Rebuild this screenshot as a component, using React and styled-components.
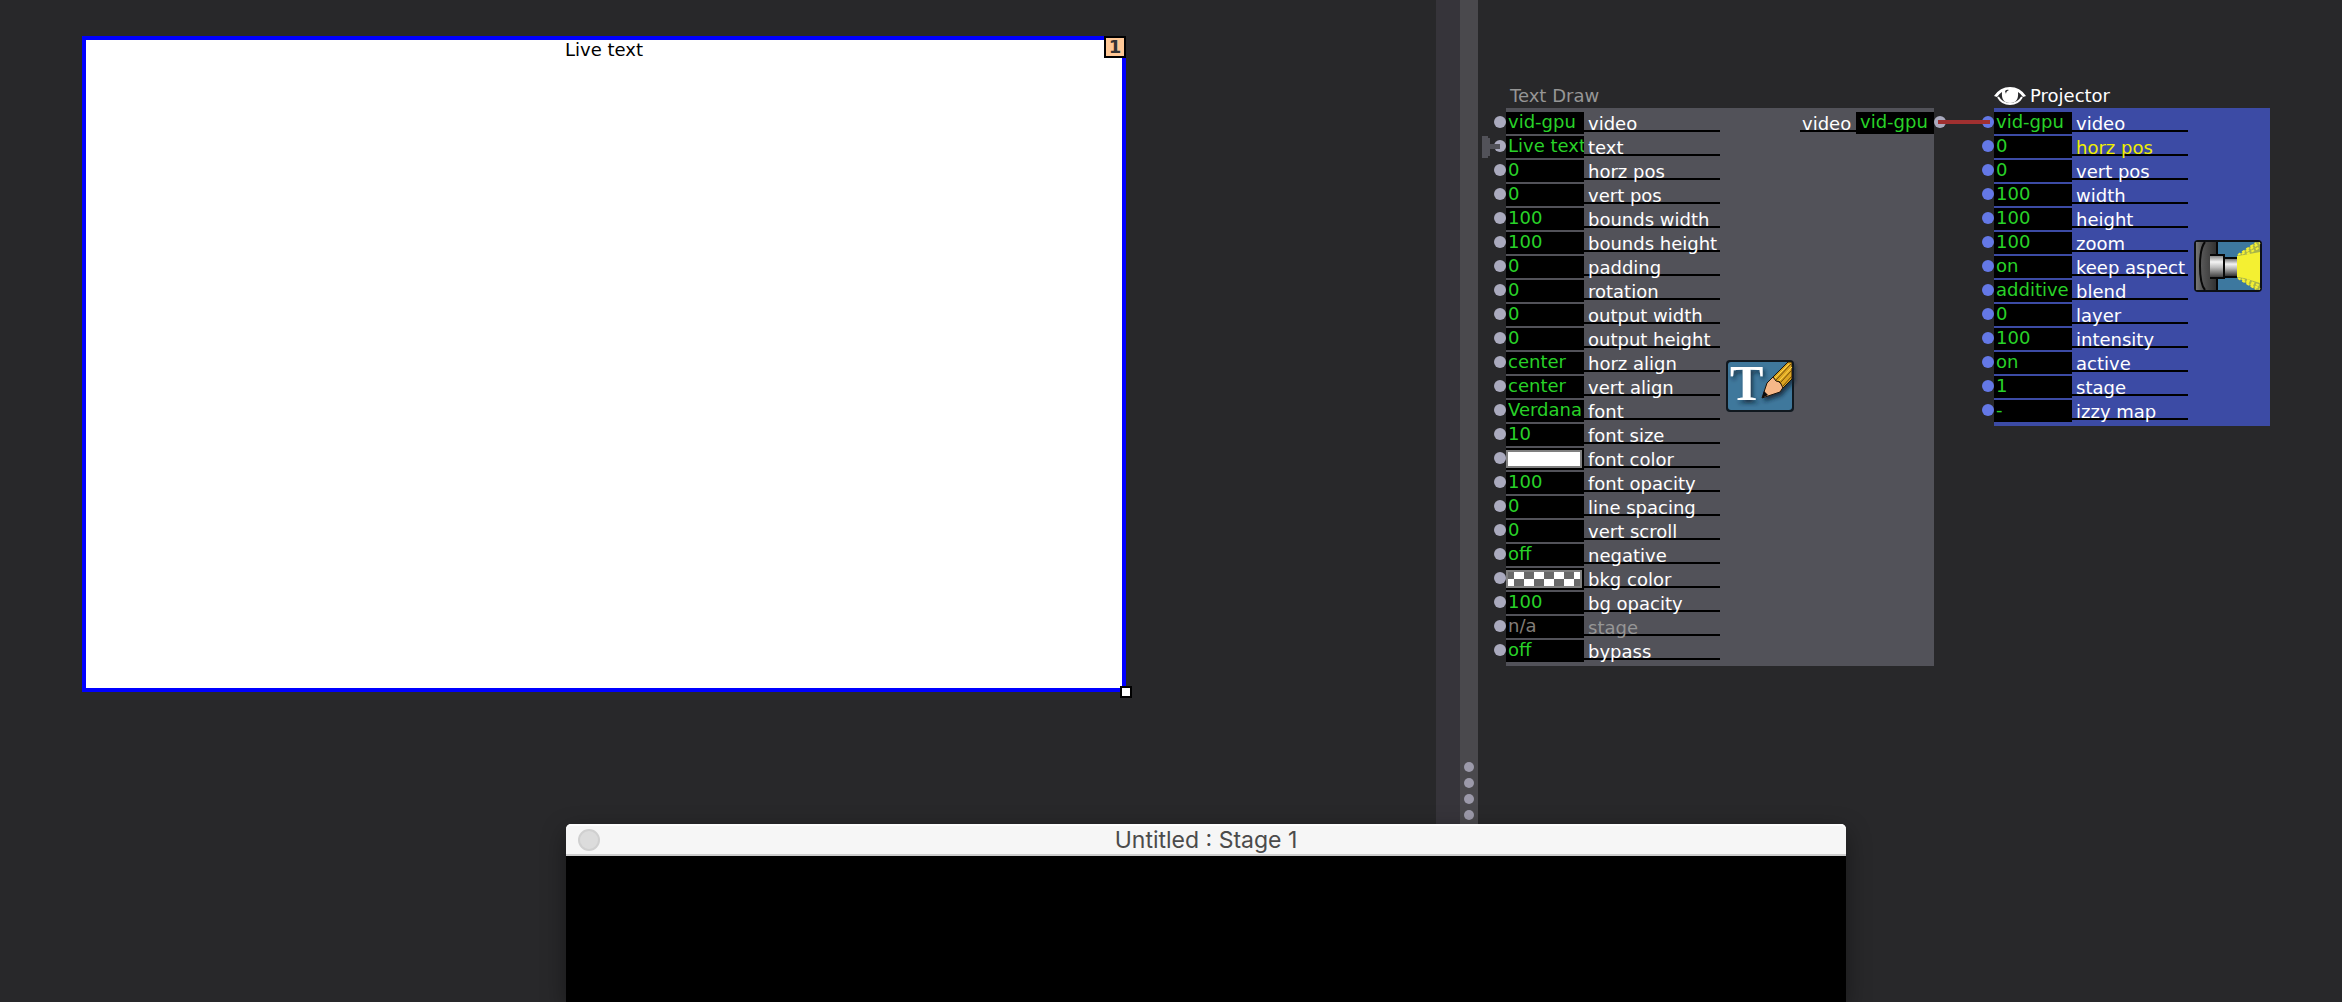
import React, { useState } from 'react'
import styled, { createGlobalStyle, css } from 'styled-components';

const textDrawInputs = [
    {name:'video',value:'vid-gpu'},
    {name:'text',value:'Live text'},
    {name:'horz pos',value:'0'},
    {name:'vert pos',value:'0'},
    {name:'bounds width',value:'100'},
    {name:'bounds height',value:'100'},
    {name:'padding',value:'0'},
    {name:'rotation',value:'0'},
    {name:'output width',value:'0'},
    {name:'output height',value:'0'},
    {name:'horz align',value:'center'},
    {name:'vert align',value:'center'},
    {name:'font',value:'Verdana'},
    {name:'font size',value:'10'},
    {name:'font color',swatch:'solid'},
    {name:'font opacity',value:'100'},
    {name:'line spacing',value:'0'},
    {name:'vert scroll',value:'0'},
    {name:'negative',value:'off'},
    {name:'bkg color',swatch:'checker'},
    {name:'bg opacity',value:'100'},
    {name:'stage',value:'n/a',disabled:true},
    {name:'bypass',value:'off'},
]

const projectorInputs = [
    {name:'video',value:'vid-gpu'},
    {name:'horz pos',value:'0',active:true},
    {name:'vert pos',value:'0'},
    {name:'width',value:'100'},
    {name:'height',value:'100'},
    {name:'zoom',value:'100'},
    {name:'keep aspect',value:'on'},
    {name:'blend',value:'additive'},
    {name:'layer',value:'0'},
    {name:'intensity',value:'100'},
    {name:'active',value:'on'},
    {name:'stage',value:'1'},
    {name:'izzy map',value:'-'},
]

function Property({id,item}) {
    const [value,setValue]=useState(item.value);
    return (
        <PropertyRow>
            {item.swatch
                ? <SwatchField><Swatch id={id} type='button' $kind={item.swatch}/></SwatchField>
                : <ValueInput id={id} value={value} disabled={item.disabled} onChange={(e)=>setValue(e.target.value)}/>
            }
            <PropertyLabel htmlFor={id} $disabled={item.disabled} $active={item.active}>{item.name}</PropertyLabel>
        </PropertyRow>
    )
}

function PropertyList({prefix,items,width}) {
    return (
        <Properties $width={width}>
            {items.map((item)=>(
                <Property key={item.name} id={`${prefix}-${item.name.replace(' ','-')}`} item={item}/>
            ))}
        </Properties>
    )
}

function Ports({items,color}) {
    return (
        <PortColumn>
            {items.map((item)=>(
                <Port key={item.name} $color={color}/>
            ))}
        </PortColumn>
    )
}

function TextDrawIcon() {
    return (
        <svg width='68' height='52' viewBox='0 0 68 52' aria-hidden='true'>
            <defs>
                <filter id='glyphShadow' x='-20%' y='-20%' width='150%' height='150%'>
                    <feDropShadow dx='2' dy='3' stdDeviation='2' floodColor='#0c2030' floodOpacity='0.8'/>
                </filter>
            </defs>
            <rect width='68' height='52' rx='4' fill='#10181f'/>
            <rect x='2' y='2' width='64' height='48' rx='3' fill='#3f789c'/>
            <text x='4' y='40' fontFamily='"Liberation Serif", serif' fontWeight='bold' fontSize='50' fill='#fff' filter='url(#glyphShadow)'>T</text>
            <g filter='url(#glyphShadow)'>
                <path d='M36 38 L41 23 L47 17 L58 26 L54 32 Z' fill='#f6b888' stroke='#1d1408' strokeWidth='1'/>
                <path d='M36 38 L38 31 L42 35 Z' fill='#0b0b0b'/>
                <path d='M47 17 L62 2 H66 V19 L57 28 L54 22 L50 21 Z' fill='#dda520' stroke='#1d1408' strokeWidth='1'/>
                <path d='M50 20 L65 4 M54 23 L66 10 M57 26 L66 16' stroke='#6d4a0a' strokeWidth='1'/>
                <path d='M49 18 L63 4 M53 21 L66 7' stroke='#ffd84a' strokeWidth='1'/>
            </g>
        </svg>
    )
}

function ProjectorIcon() {
    return (
        <svg width='68' height='52' viewBox='0 0 68 52' aria-hidden='true'>
            <defs>
                <linearGradient id='metal' x1='0' y1='0' x2='0' y2='1'>
                    <stop offset='0' stopColor='#777'/>
                    <stop offset='0.3' stopColor='#f4f4f4'/>
                    <stop offset='0.55' stopColor='#bbb'/>
                    <stop offset='1' stopColor='#333'/>
                </linearGradient>
                <linearGradient id='housing' x1='0' y1='0' x2='1' y2='0'>
                    <stop offset='0' stopColor='#777'/>
                    <stop offset='0.3' stopColor='#555'/>
                    <stop offset='1' stopColor='#303030'/>
                </linearGradient>
            </defs>
            <rect width='68' height='52' rx='4' fill='#0d1015'/>
            <rect x='2' y='2' width='64' height='48' rx='2' fill='#3d789f'/>
            <path d='M43 16 L66 10 V44 L43 37 Z' fill='#f4f032'/>
            <path d='M43 16 L62 2 H66 V12 L50 15 Z M43 37 L62 50 H66 V43 L50 38 Z' fill='#a9b44a'/>
            <path d='M44 15 L62 3 M48 14 L66 3 M53 14 L66 7 M44 38 L62 49 M48 39 L66 49 M53 40 L66 46' stroke='#f4f032' strokeWidth='2' strokeDasharray='3 2'/>
            <path d='M2 2 H23 V50 H2 Z' fill='url(#housing)'/>
            <path d='M11 2 Q6 8 6 26 Q6 44 11 50' fill='none' stroke='#080808' strokeWidth='2'/>
            <path d='M23 2 V50' stroke='#080808' strokeWidth='2'/>
            <rect x='16' y='15' width='14' height='23' fill='url(#metal)'/>
            <path d='M16 15 H30 V38 H16' fill='none' stroke='#080808' strokeWidth='2'/>
            <rect x='31' y='19' width='12' height='17' fill='url(#metal)'/>
            <path d='M31 18 H43 M31 37 H43' stroke='#080808' strokeWidth='2'/>
        </svg>
    )
}

function EyeIcon() {
    return (
        <svg width='32' height='20' viewBox='0 0 32 20' aria-hidden='true'>
            <path d='M0 10 Q6 1 16 1 Q26 1 32 10 L29 11 Q27 8 24 6 Q25 17 16 17 Q7 17 8 6 Q5 8 3 11 Z' fill='#fff'/>
            <path d='M4 11 Q8 18 16 18 Q24 18 28 11' fill='none' stroke='#fff' strokeWidth='2'/>
            <path d='M11 5 Q13 3 15 4 Q12 5 12 8 Z' fill='#28282a'/>
        </svg>
    )
}

function App() {
    return (
        <>
            <GlobalStyle/>
            <Workspace>
                <StagePane>
                    <StagePreview>
                        <LiveText>Live text</LiveText>
                        <StageNumber>1</StageNumber>
                        <ResizeHandle/>
                    </StagePreview>
                </StagePane>
                <ScrollTrack/>
                <Splitter>
                    <Grip/>
                    <Grip/>
                    <Grip/>
                    <Grip/>
                </Splitter>
                <PatchCanvas>
                    <Node $x={16} $y={84}>
                        <NodeTitle $muted>Text Draw</NodeTitle>
                        <NodeBody>
                            <Ports items={textDrawInputs} color='#aaaabe'/>
                            <NodePanel $color='#525259' $width={428}>
                                <PropertyList prefix='text-draw' items={textDrawInputs} width={214}/>
                                <IconSlot><TextDrawIcon/></IconSlot>
                                <OutputRow>
                                    <OutputLabel htmlFor='text-draw-output'>video</OutputLabel>
                                    <ValueInput id='text-draw-output' $output defaultValue='vid-gpu'/>
                                </OutputRow>
                            </NodePanel>
                            <PortColumn><Port $color='#aaaabe'/></PortColumn>
                        </NodeBody>
                        <LiveLink width='18' height='22' viewBox='0 0 18 22' aria-hidden='true'>
                            <path d='M0 0 H6 V2 H8 V8 H18 V13 H8 V20 H6 V22 H0 Z' fill='#525259'/>
                        </LiveLink>
                    </Node>
                    <Node $x={504} $y={84}>
                        <NodeTitle><EyeIcon/>Projector</NodeTitle>
                        <NodeBody>
                            <Ports items={projectorInputs} color='#6478e6'/>
                            <NodePanel $color='#3c4ba5' $width={276}>
                                <PropertyList prefix='projector' items={projectorInputs} width={194}/>
                                <IconSlot><ProjectorIcon/></IconSlot>
                            </NodePanel>
                        </NodeBody>
                    </Node>
                    <Wire/>
                </PatchCanvas>
                <StageWindow>
                    <TitleBar>
                        <CloseButton type='button' aria-label='Close'/>
                        <WindowTitle>Untitled : Stage 1</WindowTitle>
                    </TitleBar>
                </StageWindow>
            </Workspace>
        </>
    )
}

export default App

const GlobalStyle=createGlobalStyle`
    *{
        box-sizing:border-box;
    }
    body{
        margin:0;
        background:#28282a;
        font-family:"DejaVu Sans", sans-serif;
        font-size:18px;
        line-height:20px;
    }
`

const Workspace=styled.main`
    position:relative;
    display:grid;
    grid-template-columns:minmax(0,1436fr) 24px 18px minmax(0,864fr);
    height:100vh;
    overflow:hidden;
`

const StagePane=styled.section`
    padding:36px 310px 0 82px;
`

const StagePreview=styled.div`
    position:relative;
    aspect-ratio:261/164;
    border:4px solid #0000ff;
    background:#fff;
`

const LiveText=styled.p`
    margin:0;
    text-align:center;
    color:#000;
`

const StageNumber=styled.span`
    position:absolute;
    top:-4px;
    right:-4px;
    width:22px;
    height:22px;
    border:2px solid #000;
    background:#ffc896;
    color:#333;
    font-size:18px;
    font-weight:bold;
    line-height:18px;
    text-align:center;
`

const ResizeHandle=styled.span`
    position:absolute;
    right:-10px;
    bottom:-10px;
    width:12px;
    height:12px;
    border:2px solid #000;
    background:#fff;
`

const ScrollTrack=styled.div`
    background:#36343a;
`

const Splitter=styled.div`
    display:flex;
    flex-direction:column;
    align-items:center;
    gap:6px;
    padding-top:762px;
    background:#4a494d;
`

const Grip=styled.span`
    width:10px;
    height:10px;
    border-radius:50%;
    background:#9c9aaa;
`

const PatchCanvas=styled.section`
    position:relative;
`

const Node=styled.article`
    position:absolute;
    left:${({$x})=>$x}px;
    top:${({$y})=>$y}px;
`

const NodeTitle=styled.h2`
    display:flex;
    align-items:center;
    gap:4px;
    height:24px;
    margin:0;
    padding-left:${({$muted})=>$muted?'16px':'12px'};
    color:${({$muted})=>$muted?'#969696':'#fff'};
    font-size:18px;
    font-weight:normal;
`

const NodeBody=styled.div`
    display:flex;
`

const PortColumn=styled.div`
    display:flex;
    flex-direction:column;
    gap:12px;
    width:12px;
    padding-top:8px;
`

const Port=styled.span`
    height:12px;
    border-radius:50%;
    background:${({$color})=>$color};
`

const NodePanel=styled.div`
    display:flex;
    align-items:flex-start;
    width:${({$width})=>$width}px;
    padding:4px 0;
    background:${({$color})=>$color};
`

const Properties=styled.div`
    display:flex;
    flex-direction:column;
    gap:2px;
    width:${({$width})=>$width}px;
`

const PropertyRow=styled.div`
    display:flex;
    align-items:flex-start;
    height:22px;
`

const ValueInput=styled.input`
    width:78px;
    height:22px;
    padding:0 0 3px ${({$output})=>$output?'4px':'2px'};
    border:0;
    outline:0;
    border-radius:0;
    background:#000;
    color:#28d228;
    font-family:inherit;
    font-size:18px;
    line-height:18px;
    &:disabled{
        color:#827d78;
    }
`

const SwatchField=styled.div`
    width:78px;
    height:22px;
    padding:2px 2px 2px 0;
    background:#000;
`

const Swatch=styled.button`
    display:block;
    width:76px;
    height:18px;
    padding:0;
    border:2px solid #808080;
    background:#fff;
    ${({$kind})=>$kind==='checker'&&css`
        background:repeating-conic-gradient(#696969 0 25%, #fff 0 50%) 6px 0 / 20px 14px;
        background-origin:padding-box;
    `}
`

const labelLine=css`
    height:20px;
    border-bottom:2px solid #000;
    line-height:24px;
    color:#fff;
    white-space:nowrap;
`

const PropertyLabel=styled.label`
    ${labelLine}
    flex:1;
    padding-left:4px;
    ${({$active})=>$active&&'color:#f0f000;'}
    ${({$disabled})=>$disabled&&'color:#969696;'}
`

const OutputRow=styled.div`
    display:flex;
    width:134px;
`

const OutputLabel=styled.label`
    ${labelLine}
    width:56px;
    padding-left:2px;
`

const IconSlot=styled.div`
    align-self:center;
    height:54px;
    padding:0 6px;
    svg{
        display:block;
        overflow:visible;
    }
`

const LiveLink=styled.svg`
    position:absolute;
    left:-12px;
    top:52px;
`

const Wire=styled.div`
    position:absolute;
    left:460px;
    top:120px;
    width:52px;
    height:4px;
    background:#a03030;
`

const StageWindow=styled.section`
    position:absolute;
    top:824px;
    right:496px;
    bottom:0;
    left:566px;
    border-radius:5px 5px 0 0;
    background:#000;
    box-shadow:0 8px 24px rgba(0,0,0,0.4);
`

const TitleBar=styled.header`
    display:grid;
    grid-template-columns:22px 1fr 22px;
    align-items:center;
    height:32px;
    padding:0 12px;
    border-bottom:2px solid #ccc;
    border-radius:5px 5px 0 0;
    background:#f6f6f6;
    box-shadow:inset 0 2px 0 #fdfdfd;
`

const CloseButton=styled.button`
    width:22px;
    height:22px;
    padding:0;
    border:2px solid #d0d0d0;
    border-radius:50%;
    background:#dcdcdc;
`

const WindowTitle=styled.h1`
    margin:0;
    text-align:center;
    color:#4b4b4b;
    font-family:Inter, sans-serif;
    font-size:23px;
    font-weight:normal;
    line-height:32px;
`
